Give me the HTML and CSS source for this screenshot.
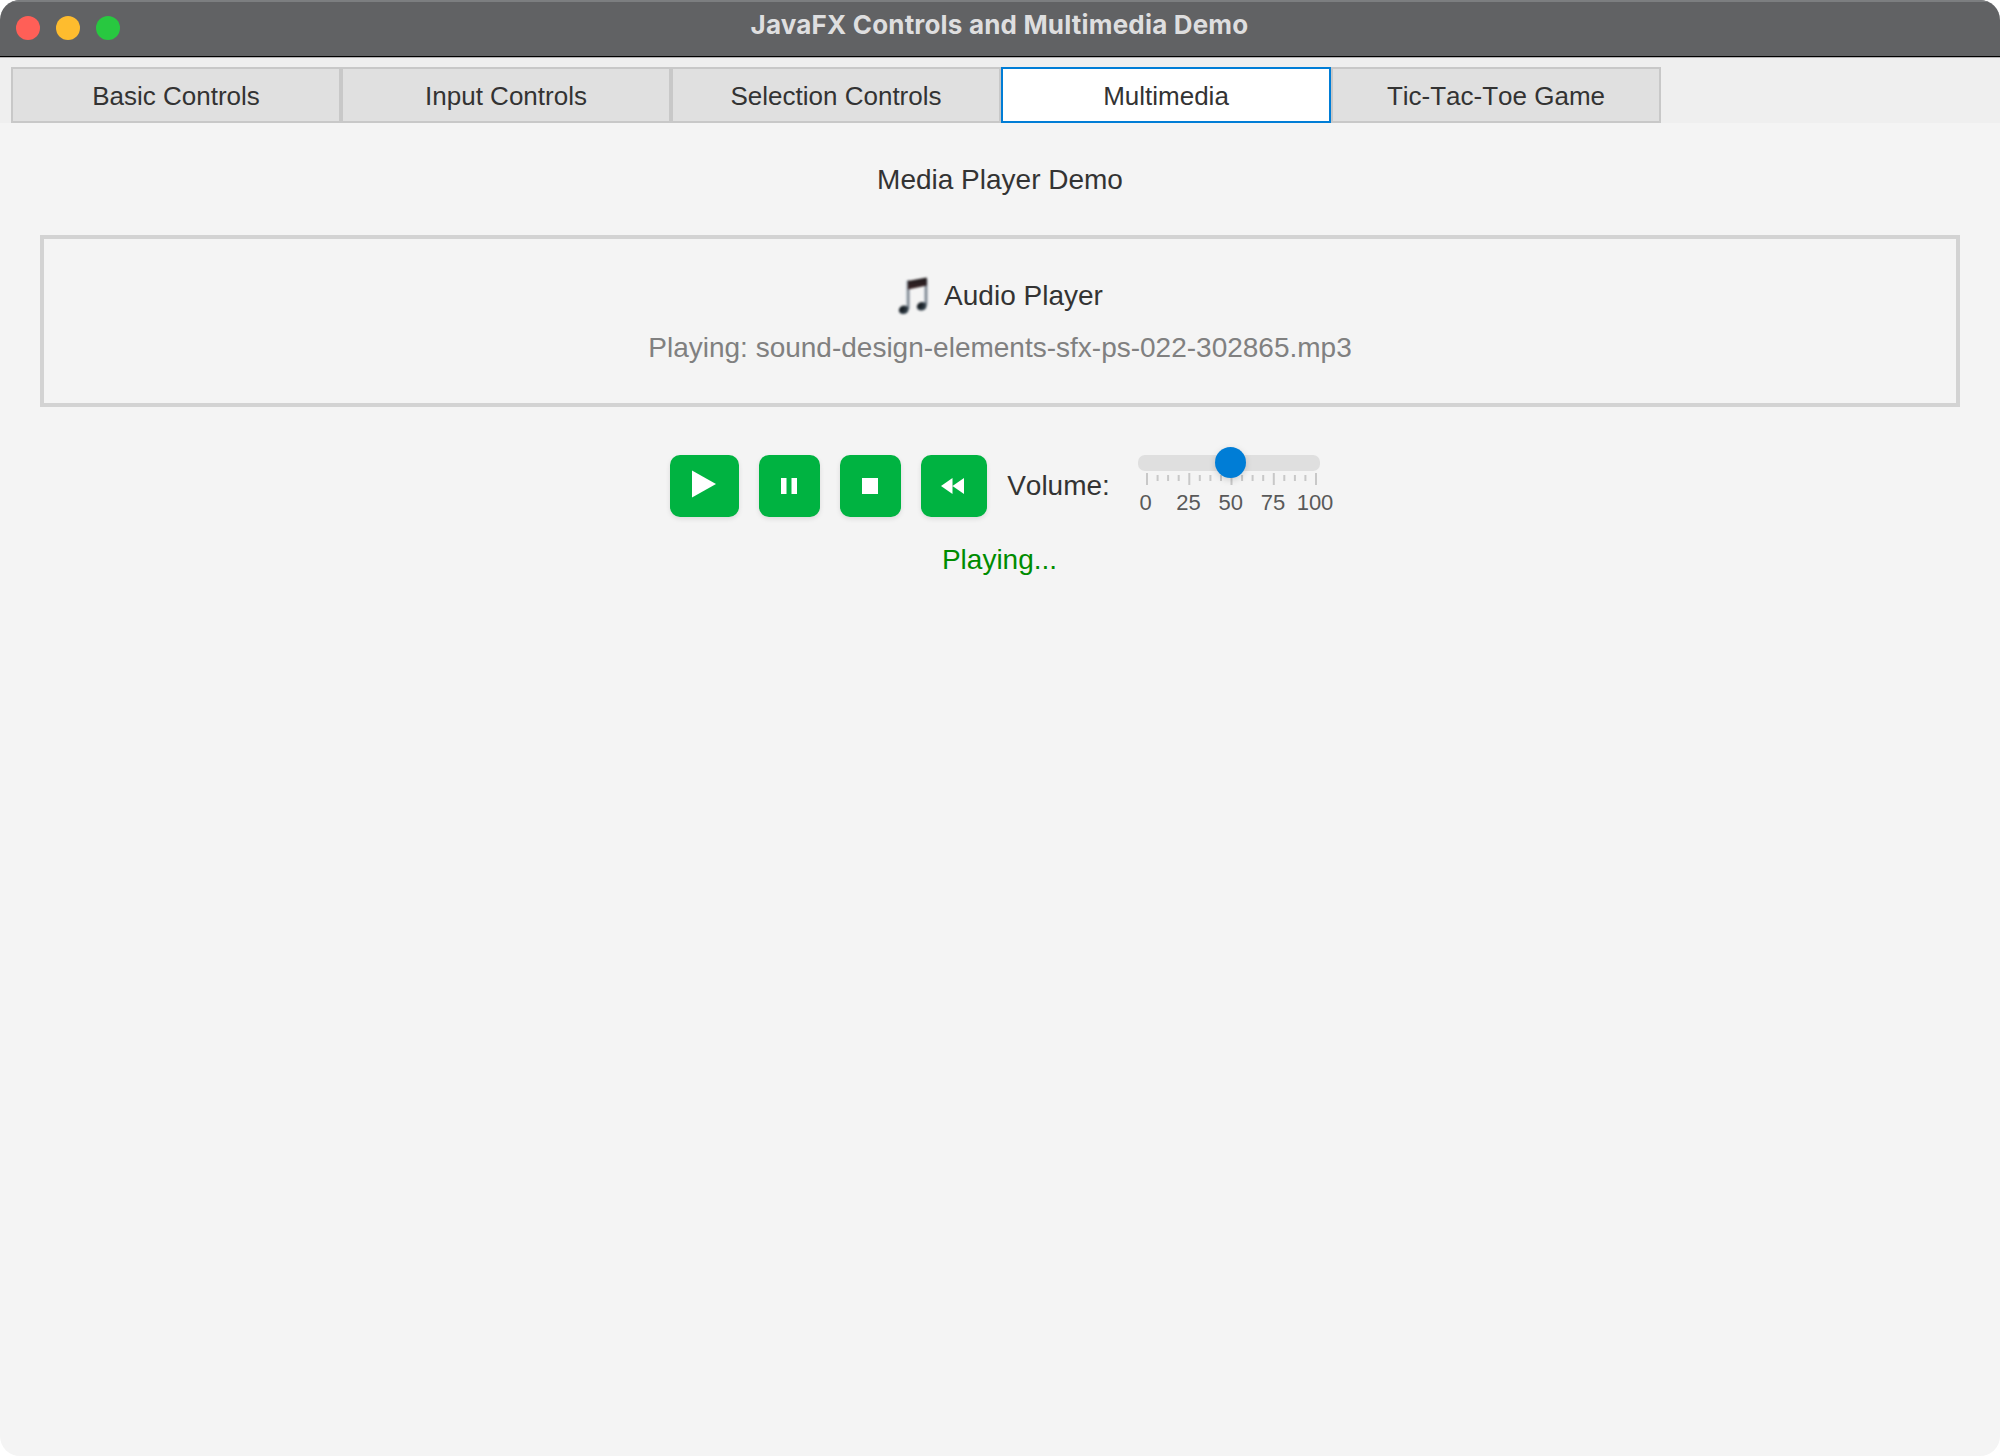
FILE: index.html
```html
<!DOCTYPE html>
<html lang="en">
<head>
<meta charset="utf-8">
<title>JavaFX Controls and Multimedia Demo</title>
<link rel="stylesheet" href="styles.css">
</head>
<body>
<div class="window">
  <header class="titlebar">
    <div class="lights"><span class="light close"></span><span class="light minimize"></span><span class="light maximize"></span></div>
    <h1 class="title">JavaFX Controls and Multimedia Demo</h1>
  </header>
  <nav class="tabs">
    <div class="tab">Basic Controls</div>
    <div class="tab">Input Controls</div>
    <div class="tab">Selection Controls</div>
    <div class="tab selected">Multimedia</div>
    <div class="tab">Tic-Tac-Toe Game</div>
  </nav>
  <main class="content">
    <div class="label">Media Player Demo</div>
    <section class="player">
      <div class="label player-name">
        <svg class="note" width="36" height="42" viewBox="-1 -1 36 42">
          <defs>
            <linearGradient id="ink" x1="0" y1="0" x2="0" y2="1"><stop offset="0" stop-color="#1d1a1c"/><stop offset="1" stop-color="#3a2426"/></linearGradient>
            <radialGradient id="head" cx=".35" cy=".35" r=".75"><stop offset="0" stop-color="#101418"/><stop offset="1" stop-color="#3d4d59"/></radialGradient>
          </defs>
          <g fill="none" stroke="#c3ccd4" stroke-width="4"><path d="M13 6V34M31 4V30"/></g>
          <g fill="none" stroke="#6d747d" stroke-width="1.600"><path d="M13.300 5V34M31 4V30"/></g>
          <path fill="url(#ink)" d="M12.800 6L31.800 2.500V10.500L12.800 14.500Z"/>
          <ellipse cx="8.700" cy="34.800" rx="5" ry="4.200" fill="url(#head)" transform="rotate(-20 8.700 34.800)"/>
          <ellipse cx="26.700" cy="31.300" rx="5" ry="4.200" fill="url(#head)" transform="rotate(-20 26.700 31.300)"/>
        </svg>
        <span>Audio Player</span>
      </div>
      <div class="label file">Playing: sound-design-elements-sfx-ps-022-302865.mp3</div>
    </section>
    <div class="controls">
      <button class="btn play" aria-label="Play"><svg width="24" height="28" viewBox="0 0 24 28"><path d="M0 .5L24 14L0 27.500Z"/></svg></button>
      <button class="btn pause" aria-label="Pause"><svg width="16" height="16" viewBox="0 0 16 16"><path d="M0 0H5.500V16H0ZM10.500 0H16V16H10.500Z"/></svg></button>
      <button class="btn stop" aria-label="Stop"><svg width="16" height="16" viewBox="0 0 16 16"><path d="M0 0H16V16H0Z"/></svg></button>
      <button class="btn rewind" aria-label="Rewind"><svg width="23" height="16" viewBox="0 0 23 16"><path d="M0 8L11.500 0V16ZM11.500 8L23 0V16Z"/></svg></button>
      <div class="label volume">Volume:</div>
      <svg class="slider" width="206" height="78" viewBox="0 0 206 78">
        <rect x="6" y="8" width="182" height="16" rx="7" fill="#dfdfdf"/>
        <g stroke="#c8c8c8" stroke-width="2">
          <path d="M15 26v12M57.300 26v12M99.500 26v12M141.800 26v12M184 26v12"/>
          <path d="M25.600 28v6M36.100 28v6M46.700 28v6M67.800 28v6M78.400 28v6M89 28v6M110.100 28v6M120.600 28v6M131.200 28v6M152.300 28v6M162.900 28v6M173.400 28v6"/>
        </g>
        <circle class="thumb" cx="98.500" cy="15.500" r="15.500" fill="#007dd6"/>
        <g class="tick-labels">
          <text x="13.700" y="63">0</text><text x="56.600" y="63">25</text><text x="98.700" y="63">50</text><text x="141" y="63">75</text><text x="183" y="63">100</text>
        </g>
      </svg>
    </div>
    <div class="label status">Playing...</div>
  </main>
</div>
</body>
</html>
```
FILE: styles.css
```css
body {
  margin: 0;
  background: #fff;
  font-family: "Liberation Sans", Arial, sans-serif;
  font-kerning: none;
  color: #333;
}
.window {
  display: flex;
  flex-direction: column;
  height: 1456px;
  box-sizing: border-box;
  border-radius: 20px;
  overflow: hidden;
  background: #f4f4f4;
}
.titlebar {
  display: grid;
  grid-template-columns: 1fr auto 1fr;
  height: 58px;
  box-sizing: border-box;
  padding: 0 17px 0 16px;
  background: #616264;
  border-bottom: 1px solid #b5b3b5;
  box-shadow: inset 0 2px #7c7e80, inset 0 -1px #000;
}
.lights {
  display: flex;
  gap: 16px;
  padding-top: 16px;
}
.light {
  width: 24px;
  height: 24px;
  border-radius: 50%;
}
.close { background: #ff5f57; }
.minimize { background: #febc2e; }
.maximize { background: #28c840; }
.title {
  margin: 0;
  padding-top: 9px;
  font: 700 26px/32px Inter, sans-serif;
  font-kerning: normal;
  letter-spacing: .18px;
  color: #dededf;
  white-space: nowrap;
}
.tabs {
  display: flex;
  padding: 9px 11px 0;
  background: #efefef;
}
.tab {
  width: 330px;
  height: 56px;
  box-sizing: border-box;
  padding-top: 12px;
  border: 2px solid #c8c8c8;
  background: #e0e0e0;
  font-size: 26px;
  line-height: 30px;
  text-align: center;
}
.tab.selected {
  background: #fff;
  border-color: #007dd6;
}
.content {
  display: flex;
  flex-direction: column;
  align-items: center;
  gap: 40px;
  padding: 40px;
}
.label {
  height: 32px;
  font-size: 28px;
  line-height: 34px;
  white-space: nowrap;
}
.player {
  display: flex;
  flex-direction: column;
  align-items: center;
  gap: 20px;
  align-self: stretch;
  padding: 40px;
  border: 4px solid #d3d3d3;
}
.player-name {
  display: flex;
  align-items: center;
  gap: 14px;
  margin-right: 3px;
}
.player-name span { padding-top: 2px; line-height: 32px; }
.note { filter: blur(.9px); }
.file { color: #808080; }
.controls {
  display: flex;
  align-items: center;
  gap: 20px;
  height: 78px;
  margin-left: 8px;
}
.btn {
  display: flex;
  align-items: center;
  justify-content: center;
  width: 61px;
  height: 62px;
  padding: 0;
  border: 0;
  border-radius: 10px;
  background: #00b341;
  box-shadow: 0 2px 5px rgba(0, 0, 0, .1);
}
.btn svg { fill: #fff; margin-right: 1px; }
.play { width: 69px; }
.btn.play svg { margin-bottom: 4px; }
.rewind { width: 66px; }
.btn.rewind svg { margin-right: 3px; }
.volume { line-height: 32px; }
.slider { margin-left: 2px; overflow: visible; }
.thumb { filter: drop-shadow(0 2px 3px rgba(0, 0, 0, .15)); }
.tick-labels {
  font-size: 22px;
  fill: #595959;
  text-anchor: middle;
}
.status {
  margin: -22px 1px 0 0;
  color: #008c00;
}
```
